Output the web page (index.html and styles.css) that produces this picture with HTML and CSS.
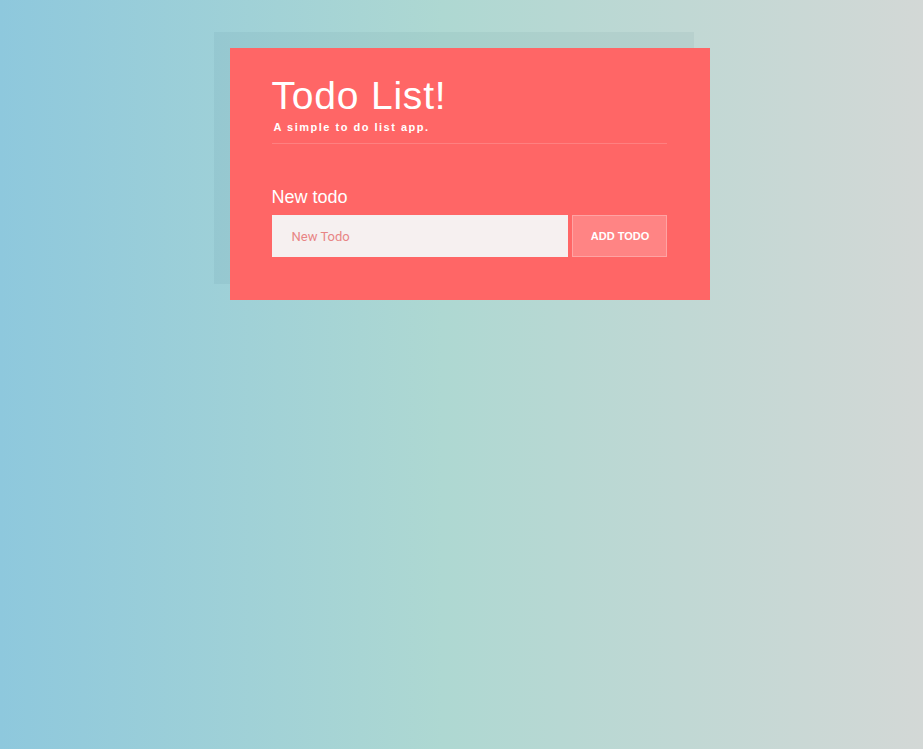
FILE: index.html
```html
<!DOCTYPE html>
<html>
<head>
<meta charset="utf-8">
<link rel="stylesheet" href="styles.css">
</head>
<body>
<div class="wrap">
  <div class="card">
    <header class="head">
      <h1 class="title">Todo List!</h1>
      <p class="sub">A simple to do list app.</p>
    </header>
    <form class="form">
      <label class="label" for="todo">New todo</label>
      <div class="row">
        <input id="todo" class="input" type="text" placeholder="New Todo">
        <button class="btn" type="button">ADD TODO</button>
      </div>
    </form>
  </div>
</div>
</body>
</html>
```
FILE: styles.css
```css
html, body {
  margin: 0;
  padding: 0;
  height: 100%;
}
body {
  background: linear-gradient(to right, #8ec8dd 0%, #aed8d2 48%, #d3d8d6 100%);
  font-family: "Liberation Sans", Arial, sans-serif;
  color: #fff;
}
.wrap {
  position: relative;
  width: 480px;
  margin: 32px auto 0;
  padding: 16px 0 0 16px;
  box-sizing: content-box;
  left: 0;
}
.wrap::before {
  content: "";
  position: absolute;
  left: 0;
  top: 0;
  width: 480px;
  height: 252px;
  background: rgba(40, 90, 100, 0.06);
}
.card {
  position: relative;
  background: #ff6666;
  height: 252px;
  box-sizing: border-box;
  padding: 26px 43px 0 42px;
}
.head {
  border-bottom: 1px solid #ff8080;
  padding-bottom: 9px;
}
.title {
  margin: 0;
  font-weight: normal;
  font-size: 39px;
  line-height: 44px;
  letter-spacing: 0.8px;
}
.sub {
  margin: 3px 0 0 2px;
  font-size: 11px;
  font-weight: bold;
  letter-spacing: 1.5px;
  line-height: 13px;
}
.form {
  margin-top: 42px;
}
.label {
  display: block;
  font-size: 18px;
  line-height: 22px;
  margin-bottom: 7px;
}
.row {
  display: flex;
  gap: 4px;
}
.input {
  width: 296px;
  height: 42px;
  box-sizing: border-box;
  border: none;
  outline: none;
  background: #f6f0f0;
  padding: 0 20px;
  font-family: Roboto, "Liberation Sans", sans-serif;
  font-size: 13px;
  color: #e57f7f;
}
.input::placeholder {
  color: #e88585;
}
.btn {
  width: 95px;
  height: 42px;
  box-sizing: border-box;
  border: 1px solid #ffa3a3;
  background: #ff8484;
  color: #fff;
  font-family: "Liberation Sans", Arial, sans-serif;
  font-weight: bold;
  font-size: 11px;
  padding: 0 0 0 2px;
}
```
